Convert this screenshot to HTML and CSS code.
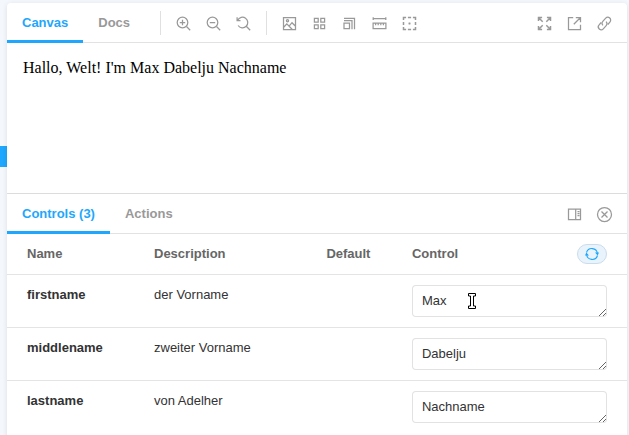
FILE: index.html
```html
<!DOCTYPE html>
<html lang="de">
<head>
<meta charset="utf-8">
<title>Storybook</title>
<link rel="stylesheet" href="styles.css">
</head>
<body>
<div class="sidebar"><div class="selected"></div></div>
<main class="panel">
  <header class="bar">
    <button class="tab active">Canvas</button>
    <button class="tab">Docs</button>
    <span class="separator first"></span>
    <div class="tools zoom">
      <svg viewBox="0 0 14 14"><circle cx="6" cy="6" r="5.3"/><path d="M10 10l3.7 3.7M3.3 6h5.4M6 3.3v5.4"/></svg>
      <svg viewBox="0 0 14 14"><circle cx="6" cy="6" r="5.3"/><path d="M10 10l3.7 3.7M3.3 6h5.4"/></svg>
      <svg viewBox="0 0 14 14"><path d="M1.2 3.7A5.3 5.3 0 1 1 1.6 9M10 10l3.7 3.7M.6.8v3.4H4"/></svg>
    </div>
    <span class="separator"></span>
    <div class="tools">
      <svg viewBox="0 0 14 14"><path d="M1 1h12v12H1zM1 11l3.3-3.7 5.3 5.4M6.8 9.3L9.5 6.2 13 9.8"/><circle cx="5" cy="4.2" r="1.1"/></svg>
      <svg viewBox="0 0 14 14"><path d="M1.9 1.9h3.8v3.8H1.9zM8.3 1.9h3.8v3.8H8.3zM1.9 8.3h3.8v3.8H1.9zM8.3 8.3h3.8v3.8H8.3z"/></svg>
      <svg viewBox="0 0 14 14"><path d="M1.5 6.5h5.5V12H1.5zM1.5 4h8v8.7M1.5 1.8h10.5v10.9"/></svg>
      <svg viewBox="0 0 14 14"><path d="M.8 2.2h12.4M.7.8v2.8M13.3.8v2.8M.6 6.5h12.8v5.7H.6zM3.1 6.5v2.3M5.7 6.5v2.3M8.3 6.5v2.3M10.9 6.5v2.3"/></svg>
      <svg class="bold" viewBox="0 0 14 14"><path d="M1 3.6V1h2.6M5.4 1h3.2M10.4 1H13v2.6M13 5.4v3.2M13 10.4V13h-2.6M8.6 13H5.4M3.6 13H1v-2.6M1 8.6V5.4M7 6v2M6 7h2"/></svg>
    </div>
    <div class="tools end">
      <svg class="bold" viewBox="0 0 14 14"><path d="M4.6 1H1v3.6M1 1l4.2 4.2M9.4 1H13v3.6M13 1L8.8 5.2M1 9.4V13h3.6M1 13l4.2-4.2M13 9.4V13H9.4M13 13L8.8 8.8"/></svg>
      <svg viewBox="0 0 14 14"><path d="M5.7 1H1v12h12V8.3M8.3 1H13v4.7M13 1L6.3 7.7"/></svg>
      <svg viewBox="0 0 14 14"><path d="M5.5 8.9a2.8 2.8 0 0 1-.2-4l2.9-3.2a2.85 2.85 0 0 1 4.2 3.9L10.3 8M8.5 5.1a2.8 2.8 0 0 1 .2 4l-2.9 3.2a2.85 2.85 0 0 1-4.2-3.9L3.7 6"/></svg>
    </div>
  </header>
  <section class="canvas">Hallo, Welt! I'm Max Dabelju Nachname</section>
  <header class="bar">
    <button class="tab active">Controls (3)</button>
    <button class="tab">Actions</button>
    <div class="tools end">
      <svg viewBox="0 0 14 14"><path d="M1 1.5h12v10.5H1zM8.2 1.5v10.5M10 4h2M10 6h2M10 8h2"/></svg>
      <svg class="close" viewBox="0 0 16 16"><circle cx="8" cy="8" r="7"/><path d="M5 5l6 6M11 5l-6 6"/></svg>
    </div>
  </header>
  <section class="controls">
    <div class="row head">
      <span>Name</span><span>Description</span><span>Default</span>
      <div class="last">Control
        <button class="reset"><svg viewBox="0 0 14 14"><path d="M1.5 5.5A5.6 5.6 0 0 1 12.4 6.5M12.5 8.5A5.6 5.6 0 0 1 1.6 7.5"/><path class="arrow" d="M10 5.5H14l-1.3 3zM4 8.5H0l1.3-3z"/></svg></button>
      </div>
    </div>
    <div class="row">
      <b>firstname</b><span>der Vorname</span><span></span>
      <div class="field">
        <textarea>Max</textarea>
        <svg class="cursor" viewBox="0 0 8 16"><path class="halo" d="M.5 .5h7v2.5h-2v10h2v2.5h-7v-2.5h2v-10h-2z"/><path class="core" d="M1 1.5h6M4 1.5v13M1 14.5h6"/></svg>
      </div>
    </div>
    <div class="row">
      <b>middlename</b><span>zweiter Vorname</span><span></span>
      <div class="field"><textarea>Dabelju</textarea></div>
    </div>
    <div class="row">
      <b>lastname</b><span>von Adelher</span><span></span>
      <div class="field"><textarea>Nachname</textarea></div>
    </div>
  </section>
</main>
</body>
</html>
```
FILE: styles.css
```css
* { box-sizing: border-box; }
body {
  margin: 0;
  height: 435px;
  overflow: hidden;
  display: flex;
  background: #f4f8fc;
  color: #333;
  font: 13px/20px "Liberation Sans", Arial, sans-serif;
}
.sidebar { width: 7px; padding-top: 146px; }
.selected { height: 21px; background: #1ea7fd; }
.panel {
  width: 620px;
  height: 440px;
  margin-top: 3px;
  background: #fff;
  border-radius: 4px 4px 0 0;
  box-shadow: 0 1px 5px rgba(0, 0, 0, .1);
}
.bar {
  height: 40px;
  display: flex;
  align-items: center;
  border-bottom: 1px solid #e2e2e2;
}
.tab {
  height: 40px;
  padding: 0 15px;
  border: 0;
  border-bottom: 3px solid transparent;
  border-top: 3px solid transparent;
  background: none;
  color: #999;
  font: bold 13px/12px "Liberation Sans", Arial, sans-serif;
  align-self: flex-start;
}
.tab.active { color: #1ea7fd; border-bottom-color: #1ea7fd; }
.separator { width: 1px; height: 24px; background: #e0e0e0; }
.separator.first { margin-left: 15px; }
.tools { display: flex; align-items: center; gap: 16px; margin: 0 15.5px; padding-top: 2px; }
.tools svg {
  width: 14px;
  height: 14px;
  overflow: visible;
  fill: none;
  stroke: #999;
  stroke-width: 1.25;
  transform: translate(-.5px, -.5px);
}
.tools .bold { stroke-width: 1.5; }
.tools.end { margin-left: auto; margin-right: 15.5px; }
.tools .close { width: 16px; height: 16px; margin: 0 -1px; }
.canvas {
  height: 151px;
  padding: 16px;
  border-bottom: 1px solid #dcdcdc;
  color: #000;
  font: 16px/18px "Liberation Serif", "Times New Roman", serif;
}
.row {
  height: 53px;
  display: grid;
  grid-template-columns: 127px 172.4px 85.6px 195px;
  padding: 10px 20px;
  border-top: 1px solid #e4e4e4;
}
.head { height: 40px; border-top: 0; color: #666; font-weight: bold; }
.last { display: flex; justify-content: space-between; align-items: center; }
.reset {
  width: 30px;
  height: 20px;
  padding: 0;
  display: grid;
  place-items: center;
  background: #e9f3fc;
  border: 1px solid #c9dced;
  border-radius: 10px;
}
.reset svg { width: 14px; height: 14px; fill: none; stroke: #1ea7fd; stroke-width: 1.1; }
.reset .arrow { fill: #1ea7fd; stroke: none; }
.field { position: relative; height: 32px; }
textarea {
  display: block;
  width: 195px;
  height: 32px;
  padding: 6px 10px;
  border: 0;
  box-shadow: inset 0 0 0 1px #e2e2e2;
  border-radius: 4px;
  overflow: hidden;
  color: #333;
  background: #fff;
  font: 13px/20px "Liberation Sans", Arial, sans-serif;
}
.cursor { position: absolute; left: 56px; top: 8px; width: 8px; height: 16px; overflow: visible; fill: none; }
.halo { fill: #fff; stroke: #000; stroke-width: 1; }
.core { stroke: #fff; stroke-width: 1; }
```
